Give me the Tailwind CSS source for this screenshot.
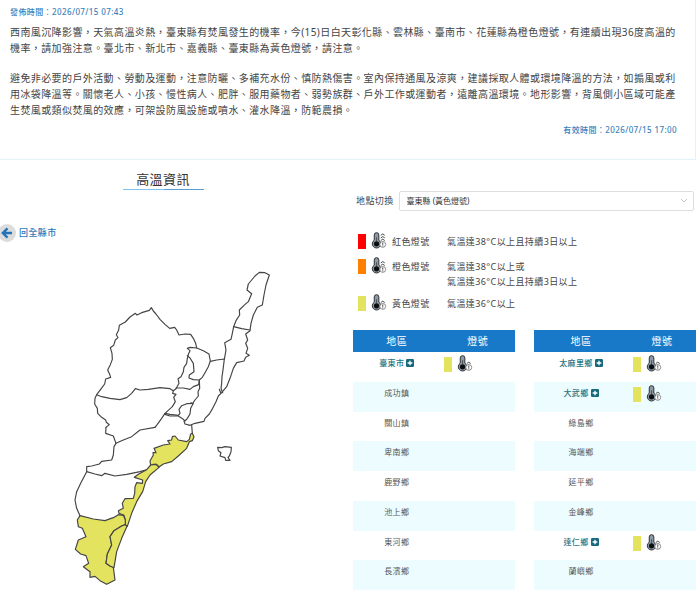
<!DOCTYPE html>
<html lang="zh-Hant">
<head>
<meta charset="utf-8">
<meta name="viewport" content="width=device-width, initial-scale=1">
<title>高溫資訊</title>
<script src="https://cdn.jsdelivr.net/npm/@tailwindcss/browser@4"></script>
</head>
<body class="bg-white font-['Noto_Sans','Noto_Sans_CJK_TC',sans-serif] tracking-wide text-[#444]">
<!-- Shared icons -->
<svg class="hidden" aria-hidden="true">
  <symbol id="thermo" viewBox="0 0 45 52">
    <path d="M8 9a7 7 0 0 1 14 0v16a13 13 0 1 1-14 0z" fill="#8d9ba8" stroke="#2b2f33" stroke-width="3"/>
    <circle cx="15" cy="36" r="8" fill="#0c0d0f"/>
    <path d="M15 16v16" stroke="#2b2f33" stroke-width="2"/>
    <circle cx="34" cy="38" r="9" fill="#fff" stroke="#555" stroke-width="2"/>
    <path d="M34 32v7M34 41v3" stroke="#444" stroke-width="3"/>
    <path d="M28 26l6-4 6 4" fill="none" stroke="#444" stroke-width="3"/>
  </symbol>
  <symbol id="caret" viewBox="0 0 45 52"><path d="M28 18l6-4 6 4" fill="none" stroke="#444" stroke-width="3"/></symbol>
  <symbol id="caret-top" viewBox="0 0 45 52"><path d="M28 10l6-4 6 4" fill="none" stroke="#444" stroke-width="3"/></symbol>
  <symbol id="plus" viewBox="0 0 24 24"><rect width="24" height="24" rx="4" fill="#15697a"/><path d="M12 5v14M5 12h14" stroke="#fff" stroke-width="4"/></symbol>
</svg>

<section class="mr-1 border-r border-b border-[#e3f1fb] pl-2.5 pt-1 pb-[21px]">
  <p class="text-[8px] leading-4 font-medium text-[#3a7fbd]">發佈時間：2026/07/15 07:43</p>
  <div class="mt-1 pr-2.5 text-[10px] leading-4">
    <p>西南風沉降影響，天氣高溫炎熱，臺東縣有焚風發生的機率，今(15)日白天彰化縣、雲林縣、臺南市、花蓮縣為橙色燈號，有連續出現36度高溫的機率，請加強注意。臺北市、新北市、嘉義縣、臺東縣為黃色燈號，請注意。</p>
    <p class="mt-[14px]">避免非必要的戶外活動、勞動及運動，注意防曬、多補充水份、慎防熱傷害。室內保持通風及涼爽，建議採取人體或環境降溫的方法，如搧風或利用冰袋降溫等。關懷老人、小孩、慢性病人、肥胖、服用藥物者、弱勢族群、戶外工作或運動者，遠離高溫環境。地形影響，背風側小區域可能產生焚風或類似焚風的效應，可架設防風設施或噴水、灌水降溫，防範農損。</p>
  </div>
  <p class="mt-1 pr-[18px] text-right text-[8px] leading-4 font-medium text-[#3a7fbd]">有效時間：2026/07/15 17:00</p>
</section>

<main class="grid grid-cols-2">
  <div>
    <div class="flex justify-center pr-6 pt-2">
      <h1 class="w-[81px] bg-[linear-gradient(90deg,#7dc3ec_50%,#5a9fd8_50%)] bg-[length:100%_1px] bg-bottom bg-no-repeat text-center text-[13px] leading-[22px] text-[#333]">高溫資訊</h1>
    </div>
    <a href="#" class="mt-[34px] -ml-0.5 flex w-fit items-center gap-[3px] text-[9px] leading-[18px] font-medium text-[#2f78b7]">
      <svg class="size-[18px]" viewBox="0 0 18 18" aria-hidden="true"><circle cx="9" cy="9" r="9" fill="#dcdcdc"/><path d="M9.5 4.3L4.8 9l4.7 4.7M5 9h9" fill="none" stroke="#2272b8" stroke-width="2.4"/></svg>
      回全縣市
    </a>
    <svg class="mt-[18px] ml-[60px] h-[328px] w-[220px]" viewBox="0 0 660 984" role="img" aria-label="臺東縣地圖" fill="none" stroke="#444" stroke-width="3.5" stroke-linejoin="round" stroke-linecap="round">
      <g transform="translate(30 0)">
        <path d="M80 404L92 388 104 372 107 357 122 352 119 343 113 330 121 314 127 298 126 280 121 263 131 256 136 240 144 233 139 224 146 210 148 196 166 186 180 171 196 160 201 165 215 158 238 151 244 143 250 153 258 162 270 178 285 193 299 205 314 202 320 210 327 225 345 222 362 223 370 235 377 250 380 264 360 262 352 265 360 272 355 283 352 295 350 310 342 322 340 335 333 350 324 356 327 370 318 386 310 392 300 386 270 383 235 388 210 390 196 386 185 400 170 413 150 419 120 415 95 410z"/>
        <path d="M380 264L400 272 417 282 421 303 415 320 405 338 397 352 388 360 370 359 357 354 358 345 372 335 370 310 360 294 352 287"/>
        <path d="M388 360L386 374 370 380 360 388 340 384 318 384"/>
        <path d="M388 360L389 385 384 395 385 408 375 420 368 430 350 431 335 437 327 448 330 460 325 466 300 463 285 460"/>
        <path d="M310 392L308 400 318 403 311 412 316 425 307 440 298 448 285 460 275 475 262 493 255 502"/>
        <path d="M285 463L300 468 325 468 340 478 345 483 352 475 360 462 362 445 370 430M363 428l6 4"/>
        <path d="M342 483L345 492 360 496 375 490 402 484 405 475 418 462 428 445 438 425 445 408 455 398 470 380 480 355 490 325 500 308 522 303 527 292 538 286 528 280 533 265 527 250 533 240 527 222 540 212 543 190 550 165 562 142 577 135 582 105 588 75 598 45 585 38 568 37 555 48 535 72 531 90 545 101 535 125 522 136 508 150 509 165 498 182 491 200 487 220 483 238 464 248 468 270 463 298"/>
        <path d="M491 200L515 206 540 210M421 304L440 300 463 297 459 330 456 350 455 370 453 385 458 398M448 388l4 10"/>
        <path d="M80 404L75 415 74 432 82 445 83 460 95 472 107 480 109 487 118 494 108 502"/>
      </g>
      <g transform="translate(0 480)">
        <path d="M138 22L137 40 160 48 168 70 162 80 160 105 155 120 125 124 118 132 95 138 80 140 80 155 62 190 50 215 45 240 50 265 60 287"/>
        <path d="M285 22L240 30 215 50 190 60 168 70M395 15L397 40M80 155L105 162 125 167 135 160 165 168 200 163 240 155 262 149"/>
        <g fill="#e4e360">
          <path d="M397 40L402 50 397 62 388 65 380 85 355 108 335 125 310 132 297 141 290 133 280 133 272 136 270 123 280 105 279 98 288 98 282 85 310 75 330 72 323 62 335 60 337 50 345 48 355 60 380 65 388 58 392 42z"/>
          <path d="M272 135L260 149 235 163 223 172 248 180 247 190 230 188 225 200 224 220 220 235 195 236 187 250 190 265 175 272 177 280 192 286 196 300 196 314 202 319 215 280 230 245 248 215 257 185 270 165 297 142 288 133z"/>
          <path d="M60 287L52 300 55 320 67 325 78 350 55 360 46 388 62 402 78 407 86 430 70 440 90 455 90 472 105 469 120 482 140 493 165 480 160 442 150 438 138 430 142 402 155 375 150 350 162 332 185 318 196 314 196 300 190 286 175 284 160 293 135 302 100 297z"/>
          <path d="M196 314L201 319 185 355 170 395 162 443 150 438 138 430 142 402 155 375 150 350 162 332 185 318z"/>
        </g>
        <path d="M473 82L485 83 495 80 514 82 513 95 508 108 504 112 510 121 497 121 495 113 480 108 483 98 475 92z"/>
      </g>
    </svg>
  </div>

  <div class="pt-[31px] pr-1 pl-[3px]">
    <div class="flex items-center gap-[5px] pr-0.5 pl-[3px]">
      <label for="place" class="text-[9px] leading-5">地點切換</label>
      <div class="relative flex-1">
        <select id="place" class="block h-5 w-full appearance-none rounded-[2px] border border-[#dedede] bg-white px-[7px] text-[8px] tracking-normal text-[#333]">
          <option>臺東縣 (黃色燈號)</option>
        </select>
        <svg class="pointer-events-none absolute top-[7px] right-1.5 h-[5px] w-2" viewBox="0 0 8 5" fill="none" stroke="#c4c4c4" aria-hidden="true"><path d="M1 1l3 3 3-3"/></svg>
      </div>
    </div>

    <ul class="mt-[23px] pl-[5px] text-[9px] leading-[15px]">
      <li class="mb-2.5 flex">
        <span class="h-[15px] w-2 bg-[#ff0000]"></span>
        <svg class="-mt-0.5 ml-[5px] h-[17px] w-4" aria-hidden="true"><use href="#thermo"/><use href="#caret"/><use href="#caret-top"/></svg>
        <span class="ml-[5px] w-[55px]">紅色燈號</span>
        <span>氣溫達38°C以上且持續3日以上</span>
      </li>
      <li class="mb-[7px] flex">
        <span class="h-[15px] w-2 bg-[#ff8000]"></span>
        <svg class="-mt-0.5 ml-[5px] h-[17px] w-4" aria-hidden="true"><use href="#thermo"/><use href="#caret"/></svg>
        <span class="ml-[5px] w-[55px]">橙色燈號</span>
        <span>氣溫達38°C以上或<br>氣溫達36°C以上且持續3日以上</span>
      </li>
      <li class="flex">
        <span class="h-[15px] w-2 bg-[#e4e360]"></span>
        <svg class="-mt-0.5 ml-[5px] h-[17px] w-4" aria-hidden="true"><use href="#thermo"/></svg>
        <span class="ml-[5px] w-[55px]">黃色燈號</span>
        <span>氣溫達36°C以上</span>
      </li>
    </ul>

    <div class="mt-[19px] grid grid-cols-2 gap-[19px] text-center text-[8px] leading-4 text-[#555]">
      <table class="h-[260px] w-full table-fixed">
        <thead class="bg-[#1979c9] text-[10px] text-white">
          <tr class="h-[22px]"><th class="w-[54%] font-normal">地區</th><th class="font-normal">燈號</th></tr>
        </thead>
        <tbody class="[&_td]:align-top [&_td]:pt-[3px] [&_tr]:h-[29px] [&_tr:nth-child(even)]:bg-[#edfcfe]">
          <tr><td><a href="#" class="inline-flex items-center gap-0.5 font-medium text-[#1f7482]">臺東市<svg class="size-2" aria-hidden="true"><use href="#plus"/></svg></a></td><td><div class="flex pt-0.5 pl-1"><span class="h-[15px] w-2 bg-[#e4e360]"></span><svg class="-mt-0.5 ml-[5px] h-[17px] w-4" role="img" aria-label="黃色燈號"><use href="#thermo"/></svg></div></td></tr>
          <tr><td>成功鎮</td><td></td></tr>
          <tr><td>關山鎮</td><td></td></tr>
          <tr><td>卑南鄉</td><td></td></tr>
          <tr><td>鹿野鄉</td><td></td></tr>
          <tr><td>池上鄉</td><td></td></tr>
          <tr><td>東河鄉</td><td></td></tr>
          <tr><td>長濱鄉</td><td></td></tr>
        </tbody>
      </table>
      <table class="h-[260px] w-full table-fixed">
        <thead class="bg-[#1979c9] text-[10px] text-white">
          <tr class="h-[22px]"><th class="w-[58%] font-normal">地區</th><th class="font-normal">燈號</th></tr>
        </thead>
        <tbody class="[&_td]:align-top [&_td]:pt-[3px] [&_tr]:h-[29px] [&_tr:nth-child(even)]:bg-[#edfcfe]">
          <tr><td><a href="#" class="inline-flex items-center gap-0.5 font-medium text-[#1f7482]">太麻里鄉<svg class="size-2" aria-hidden="true"><use href="#plus"/></svg></a></td><td><div class="flex pt-0.5 pl-[5px]"><span class="h-[15px] w-2 bg-[#e4e360]"></span><svg class="-mt-0.5 ml-[5px] h-[17px] w-4" role="img" aria-label="黃色燈號"><use href="#thermo"/></svg></div></td></tr>
          <tr><td><a href="#" class="inline-flex items-center gap-0.5 font-medium text-[#1f7482]">大武鄉<svg class="size-2" aria-hidden="true"><use href="#plus"/></svg></a></td><td><div class="flex pt-0.5 pl-[5px]"><span class="h-[15px] w-2 bg-[#e4e360]"></span><svg class="-mt-0.5 ml-[5px] h-[17px] w-4" role="img" aria-label="黃色燈號"><use href="#thermo"/></svg></div></td></tr>
          <tr><td>綠島鄉</td><td></td></tr>
          <tr><td>海端鄉</td><td></td></tr>
          <tr><td>延平鄉</td><td></td></tr>
          <tr><td>金峰鄉</td><td></td></tr>
          <tr><td><a href="#" class="inline-flex items-center gap-0.5 font-medium text-[#1f7482]">達仁鄉<svg class="size-2" aria-hidden="true"><use href="#plus"/></svg></a></td><td><div class="flex pt-0.5 pl-[5px]"><span class="h-[15px] w-2 bg-[#e4e360]"></span><svg class="-mt-0.5 ml-[5px] h-[17px] w-4" role="img" aria-label="黃色燈號"><use href="#thermo"/></svg></div></td></tr>
          <tr><td>蘭嶼鄉</td><td></td></tr>
        </tbody>
      </table>
    </div>
  </div>
</main>
</body>
</html>
